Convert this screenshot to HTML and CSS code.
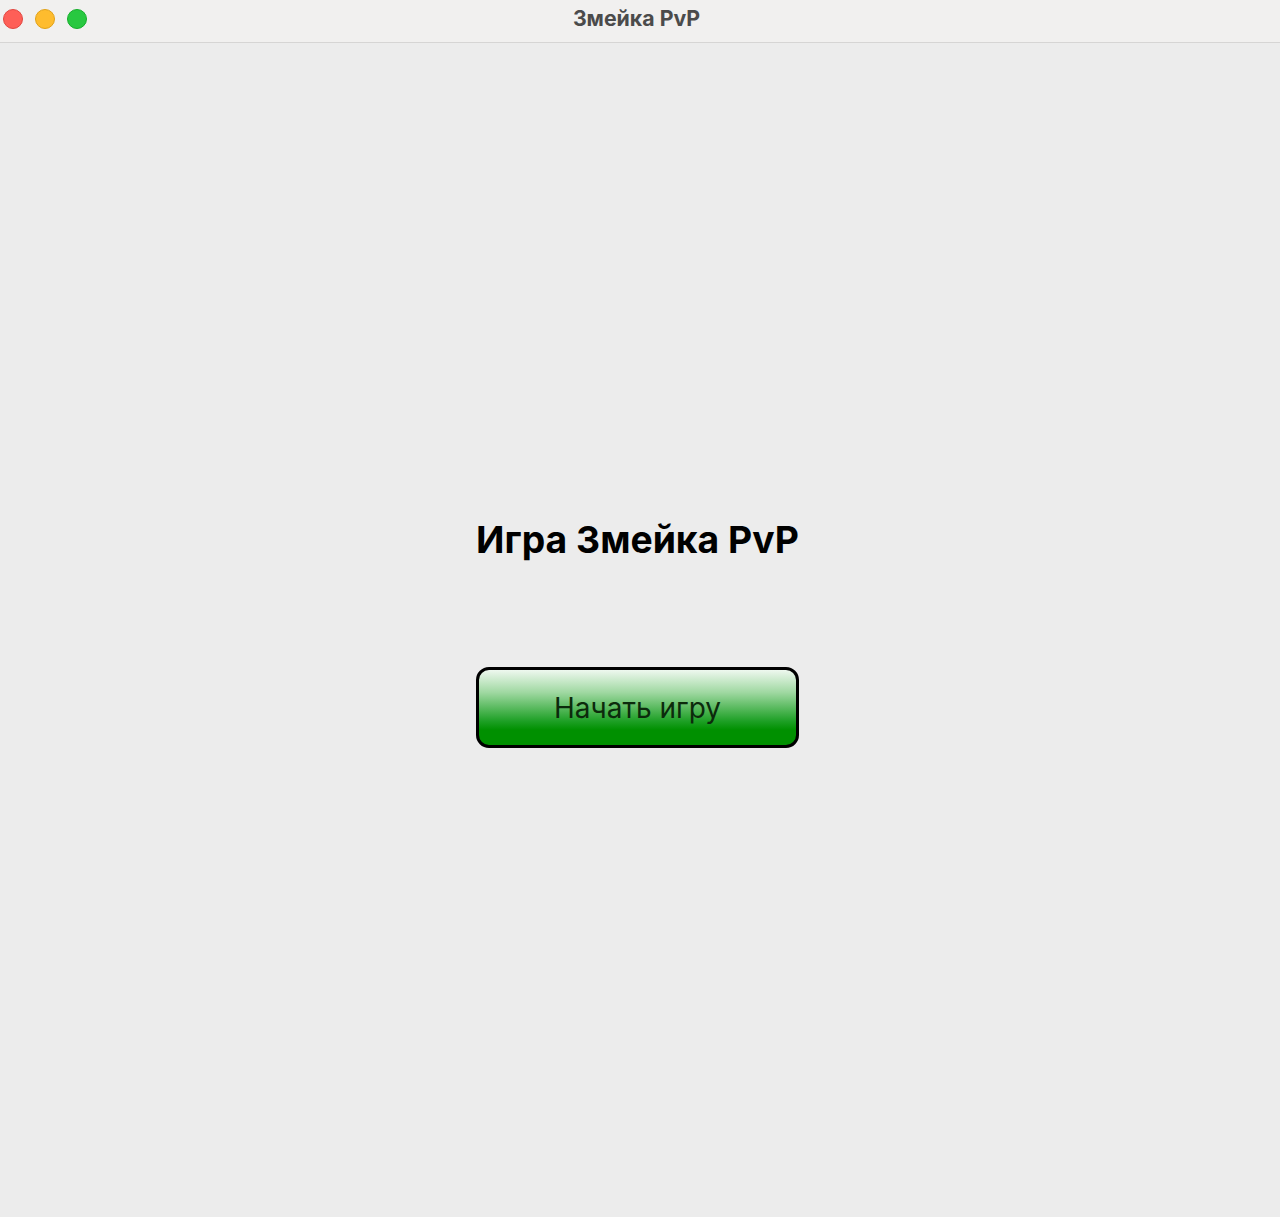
FILE: index.html
```html
<!DOCTYPE html>
<html lang="ru">
<head>
<meta charset="utf-8">
<title>Змейка PvP</title>
<link rel="stylesheet" href="styles.css">
</head>
<body>
<div class="window">
  <header class="titlebar">
    <div class="lights">
      <span class="light red"></span>
      <span class="light yellow"></span>
      <span class="light green"></span>
    </div>
    <div class="title">Змейка PvP</div>
  </header>
  <main class="content">
    <div class="group">
      <h1 class="heading">Игра Змейка PvP</h1>
      <button class="start">Начать игру</button>
    </div>
  </main>
</div>
</body>
</html>
```

FILE: styles.css
```css
* { box-sizing: border-box; }
html, body { margin: 0; padding: 0; height: 100%; }
body {
  font-family: Inter, "Noto Sans", "Liberation Sans", sans-serif;
  background: #ececec;
}
.window {
  display: flex;
  flex-direction: column;
  height: 1217px;
}
.titlebar {
  position: relative;
  height: 43px;
  flex: none;
  background: #f1f0ef;
  border-bottom: 1px solid #d6d5d4;
  display: flex;
  align-items: center;
  justify-content: center;
}
.lights {
  position: absolute;
  left: 3px;
  top: 9px;
  display: flex;
  gap: 12px;
}
.light {
  width: 20px;
  height: 20px;
  border-radius: 50%;
  display: block;
}
.red { background: #fe5f57; border: 1px solid #e2463f; }
.yellow { background: #febc2e; border: 1px solid #e1a116; }
.green { background: #28c840; border: 1px solid #14ae2a; }
.title {
  font-size: 21.3px;
  font-weight: 700;
  color: #4b4b4b;
  margin-top: -7px;
  margin-left: -7px;
}
.content {
  flex: 1;
  display: flex;
  align-items: center;
  justify-content: center;
  padding-top: 5px;
}
.group {
  display: flex;
  flex-direction: column;
  align-items: center;
  gap: 105px;
  margin-left: -5px;
}
.heading {
  margin: 0;
  font-size: 37.3px;
  line-height: 44px;
  font-weight: 700;
  color: #000;
}
.start {
  width: 323px;
  height: 81px;
  border: 3px solid #000;
  border-radius: 13px;
  background: linear-gradient(to bottom, #eef8ef 0%, #9fd8a1 30%, #1ea026 68%, #009000 80%, #009000 100%);
  font-family: Inter, "Noto Sans", "Liberation Sans", sans-serif;
  font-size: 28px;
  color: #0c2a0c;
  padding: 0;
  padding-top: 2px;
  cursor: pointer;
}
```
